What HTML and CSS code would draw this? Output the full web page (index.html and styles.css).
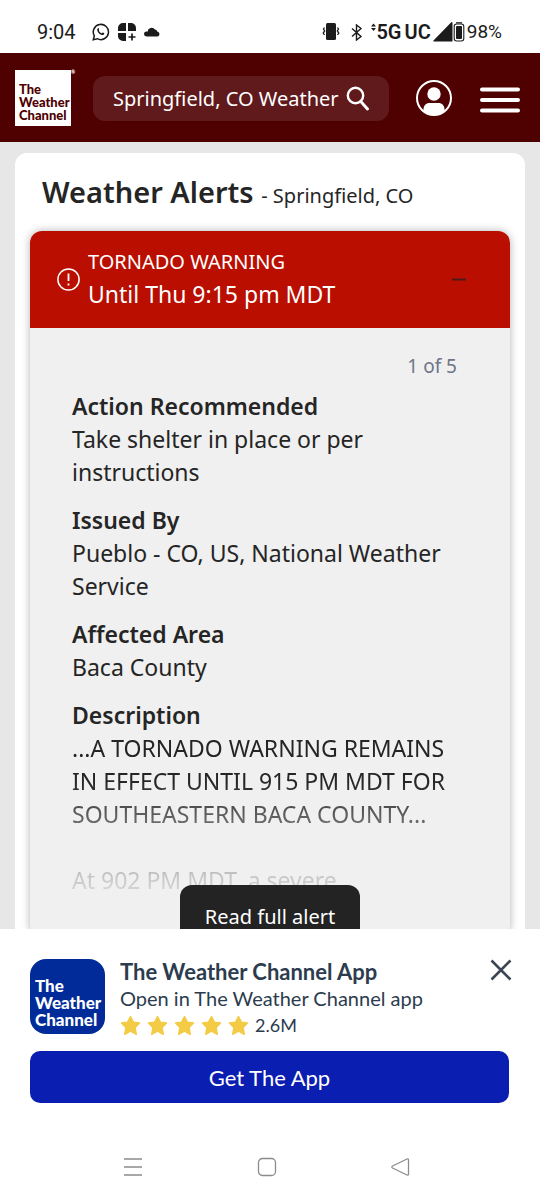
FILE: index.html
```html
<!DOCTYPE html>
<html lang="en">
<head>
<meta charset="utf-8">
<meta name="viewport" content="width=device-width, initial-scale=1">
<title>Weather Alerts - Springfield, CO</title>
<link rel="stylesheet" href="styles.css">
</head>
<body>
<div class="status-bar">
  <span class="clock">9:04</span>
  <div class="status-left">
    <svg width="18" height="18" viewBox="0 0 18 18" fill="none" stroke="#1b1b1b" stroke-width="1.5"><path d="M1.3 16.7l1-3.9a7.6 7.6 0 1 1 3 2.9z"/><path d="M6 5.2c.8-.7 1.300 1.300 1 1.900-.5.8.9 2.600 2.300 3.100.8.3 1-.9 1.700-.7l1.300.8c-.2 2-2 2-3.300 1.500C7.200 11 5.700 9.300 5.300 7.600c-.2-1 0-1.800.7-2.400z" fill="#1b1b1b" stroke="none"/></svg>
    <svg class="apps" width="18" height="18" viewBox="0 0 18 18" fill="#1b1b1b"><path d="M8 0v8H0V5a5 5 0 0 1 5-5zM10 0h3a5 5 0 0 1 5 5v3h-8zM0 10h8v8H5a5 5 0 0 1-5-5z"/><path d="M14 10.500v7M10.500 14h7" stroke="#1b1b1b" stroke-width="1.700"/></svg>
    <svg width="16" height="10" viewBox="0 0 16 10" fill="#1b1b1b"><path d="M2.500 9.500a2.500 2.500 0 0 1 0-5c.5 0 .7 0 1 .2A4.200 4.200 0 0 1 11 2.500c1.300 0 2 1 2.200 2a2.600 2.600 0 0 1 .6 5z"/></svg>
  </div>
  <div class="status-right">
    <svg width="18" height="18" viewBox="0 0 18 18"><rect x="4" y="0" width="10" height="17" rx="1.500" fill="#1b1b1b"/><path d="M2.500 4.500l-1 1.500 1.200 2-1.500 2 1.300 2M15.500 4.500l1 1.500-1.200 2 1.500 2-1.300 2" fill="none" stroke="#1b1b1b" stroke-width="1.300"/></svg>
    <svg class="bluetooth" width="12" height="17" viewBox="0 0 12 17" fill="none" stroke="#1b1b1b" stroke-width="1.400"><path d="M1 4.500l9 8-4.500 3.500V1L10 4.500l-9 8"/></svg>
    <svg class="updown" width="5" height="18" viewBox="0 0 5 18" fill="#1b1b1b"><path d="M0 3.500L2.500.5 5 3.500zM0 5h5L2.500 8z"/></svg>
    <span class="network">5G</span><span class="network network-type">UC</span>
    <svg class="signal" width="20" height="20" viewBox="0 0 20 20" fill="#1b1b1b"><path d="M18.500 0a1 1 0 0 1 1 1v18.500H1a.6.6 0 0 1-.5-1z"/></svg>
    <svg width="12" height="20" viewBox="0 0 12 20"><path d="M3 .8h6" stroke="#1b1b1b" stroke-width="1.200"/><rect x="1.200" y="2" width="9.600" height="17" rx="2.500" fill="none" stroke="#1b1b1b" stroke-width="1.100"/><rect x="3" y="4" width="6" height="13" rx="1" fill="#1b1b1b"/></svg>
    <span class="percent">98%</span>
  </div>
</div>

<header class="site-header">
  <a class="logo" href="#" aria-label="The Weather Channel home"><span>The</span><span>Weather</span><span>Channel</span><span class="reg">®</span></a>
  <button class="search" type="button"><span>Springfield, CO Weather</span>
    <svg width="24" height="25" viewBox="0 0 24 25" fill="none" stroke="#fff" stroke-width="2.400"><circle cx="9.500" cy="9.500" r="7.700"/><path d="M14.800 15.500l6.700 7.500" stroke-width="2.900" stroke-linecap="round"/></svg>
  </button>
  <button class="icon-button account" type="button" aria-label="Account">
    <svg width="36" height="36" viewBox="0 0 36 36"><circle cx="18" cy="18" r="17" fill="none" stroke="#fff" stroke-width="2"/><circle cx="18" cy="14" r="6.700" fill="#fff"/><path d="M7.500 31v-1.500c0-4 2.500-6.500 6-6.500h9c3.500 0 6 2.500 6 6.500V31A17 17 0 0 1 7.500 31z" fill="#fff"/></svg>
  </button>
  <button class="icon-button menu" type="button" aria-label="Menu">
    <svg width="40" height="26" viewBox="0 0 40 26" stroke="#fff" stroke-width="4" stroke-linecap="round"><path d="M2 2.500h36M2 13h36M2 23.500h36"/></svg>
  </button>
</header>

<main class="content">
  <section class="card">
    <h1 class="title">Weather Alerts <span class="place">- Springfield, CO</span></h1>
    <article class="alert">
      <button class="alert-head" type="button" aria-expanded="true">
        <svg width="23" height="23" viewBox="0 0 23 23" fill="none" stroke="#fff"><circle cx="11.500" cy="11.500" r="10.600" stroke-width="1.500"/><path d="M11.500 5.500v7.500M11.500 15.500v2" stroke-width="1.800"/></svg>
        <span class="alert-text"><span class="alert-name">TORNADO WARNING</span><span class="alert-until">Until Thu 9:15 pm MDT</span></span>
        <svg width="14" height="3" viewBox="0 0 14 3"><path d="M0 1.500h14" stroke="#4b1a18" stroke-width="2"/></svg>
      </button>
      <div class="alert-body">
        <p class="count">1 of 5</p>
        <dl class="details">
          <div><dt>Action Recommended</dt><dd>Take shelter in place or per<br>instructions</dd></div>
          <div><dt>Issued By</dt><dd>Pueblo - CO, US, National Weather<br>Service</dd></div>
          <div><dt>Affected Area</dt><dd>Baca County</dd></div>
          <div><dt>Description</dt><dd class="faded">...A TORNADO WARNING REMAINS<br>IN EFFECT UNTIL 915 PM MDT FOR<br>SOUTHEASTERN BACA COUNTY...<br><br>At 902 PM MDT, a severe</dd></div>
        </dl>
        <button class="read-more" type="button">Read full alert</button>
      </div>
    </article>
  </section>
</main>

<aside class="app-banner">
  <div class="app-row">
    <div class="app-icon"><span>The</span><span>Weather</span><span>Channel</span></div>
    <div class="app-info">
      <h2 class="app-name">The Weather Channel App</h2>
      <p class="app-sub">Open in The Weather Channel app</p>
      <div class="rating">
        <svg width="129" height="21" viewBox="0 0 129 21" fill="#f4cb45" stroke="#f4cb45" stroke-width="1.500" stroke-linejoin="round" role="img" aria-label="5 stars"><defs><path id="star" d="M10.500 1.500l2.900 5.700 6.100.9-4.400 4.500 1.200 6.700-5.800-3.100-5.800 3.100 1.200-6.700L1.500 8.100l6.100-.9z"/></defs><use href="#star"/><use href="#star" x="27"/><use href="#star" x="54"/><use href="#star" x="81"/><use href="#star" x="108"/></svg>
        <span>2.6M</span>
      </div>
    </div>
    <button class="icon-button close" type="button" aria-label="Close"><svg width="22" height="22" viewBox="0 0 22 22" stroke="#3b4653" stroke-width="2.600"><path d="M1.500 1.500l19 19M20.500 1.500l-19 19"/></svg></button>
  </div>
  <button class="get-app" type="button">Get The App</button>
</aside>

<nav class="system-nav" aria-label="System">
  <button class="icon-button" type="button" aria-label="Recent apps"><svg width="20" height="20" viewBox="0 0 20 20" stroke="#8c8c8c" stroke-width="1.400"><path d="M1 2h18M1 10h18M1 18h18"/></svg></button>
  <button class="icon-button" type="button" aria-label="Home"><svg width="20" height="20" viewBox="0 0 20 20" fill="none" stroke="#8c8c8c" stroke-width="1.300"><rect x="1.500" y="1.500" width="17" height="17" rx="4"/></svg></button>
  <button class="icon-button" type="button" aria-label="Back"><svg width="20" height="20" viewBox="0 0 20 20" fill="none" stroke="#8c8c8c" stroke-width="1.300" stroke-linejoin="round"><path d="M17 2L2.500 9q-1.300 1 0 2L17 18q1.500.5 1.500-1V3q0-1.500-1.500-1z"/></svg></button>
</nav>
</body>
</html>
```
FILE: styles.css
```css
* { box-sizing: border-box; }
body {
  margin: 0;
  height: 100vh;
  display: flex;
  flex-direction: column;
  background: #fff;
  color: #252525;
  font-family: "Noto Sans", sans-serif;
}
h1, h2, p, dl, dd { margin: 0; }
button { border: 0; padding: 0; background: none; color: inherit; font: inherit; cursor: pointer; }
svg { display: block; flex: none; }

.status-bar {
  display: flex;
  align-items: center;
  padding: 20px 38px 9px 37px;
  flex: none;
  font: 20px/24px Roboto, sans-serif;
  color: #1b1b1b;
}
.clock { width: 55px; }
.status-left { display: flex; align-items: center; gap: 8px; }
.status-right { display: flex; align-items: center; margin-left: auto; }
.bluetooth { margin: 0 8px 0 11px; }
.network { font-weight: 600; font-size: 20px; }
.network-type { margin: 0 2px 0 3px; }
.percent { margin-left: 2px; font-size: 19px; }

.site-header {
  display: flex;
  align-items: center;
  flex: none;
  padding: 17px 20px 16px 15px;
  background: #4f0000;
  color: #fff;
}
.logo {
  position: relative;
  display: flex;
  flex-direction: column;
  width: 56px;
  height: 56px;
  padding: 13px 0 0 4px;
  background: #fff;
  color: #4f0000;
  font: 900 13px/13px Lato, sans-serif;
  text-decoration: none;
}
.reg { position: absolute; top: 0; left: 56px; font-size: 5px; line-height: 5px; color: #fff; }
.search {
  display: flex;
  align-items: center;
  justify-content: space-between;
  flex: 1;
  height: 45px;
  margin-left: 22px;
  padding: 0 19px 0 20px;
  border-radius: 12px;
  background: #611a1c;
  font-size: 20px;
  white-space: nowrap;
}
.account { margin: 0 28px 0 27px; }
.menu { margin-top: 3px; }

.content {
  flex: 1;
  min-height: 0;
  padding: 11px 15px 0;
  overflow: hidden;
  background: #e7e7e7;
}
.card { padding: 19px 15px 40px; border-radius: 12px; background: #fff; }
.title { padding: 0 12px; font-size: 29px; line-height: 40px; font-weight: 600; white-space: nowrap; }
.place { font-size: 20px; font-weight: 400; }
.alert { margin-top: 19px; border-radius: 12px; background: #f0f0f0; box-shadow: 0 0 8px rgba(0, 0, 0, .3); }
.alert-head {
  display: flex;
  align-items: center;
  gap: 8px;
  width: 100%;
  padding: 16px 44px 16px 27px;
  border-radius: 12px 12px 0 0;
  background: #b90e00;
  color: #fff;
  text-align: left;
}
.alert { margin-top: 15px; }
.alert-text { flex: 1; }
.alert-name, .alert-until { display: block; }
.alert-name { font-size: 20px; line-height: 30px; }
.alert-until { font-size: 23px; line-height: 35px; }
.alert-body { position: relative; padding: 22px 42px 40px; font-size: 23px; line-height: 33px; }
.count { padding-right: 11px; font-size: 19px; color: #6f7585; text-align: right; }
.details { display: grid; gap: 15px; padding-top: 7px; white-space: nowrap; }
dt { font-weight: 600; }
.faded {
  -webkit-mask-image: linear-gradient(#000 50px, rgba(0, 0, 0, .2) 145px, rgba(0, 0, 0, .1));
  mask-image: linear-gradient(#000 50px, rgba(0, 0, 0, .2) 145px, rgba(0, 0, 0, .1));
}
.read-more {
  position: absolute;
  left: 50%;
  bottom: -10px;
  width: 180px;
  height: 62px;
  transform: translateX(-50%);
  border-radius: 12px;
  background: #232323;
  color: #fff;
  font-size: 20px;
}

.app-banner {
  flex: none;
  padding: 30px 31px 0 30px;
  background: #fff;
  color: #2c3c4e;
  font-family: Lato, sans-serif;
}
.app-row { display: flex; align-items: flex-start; }
.app-icon {
  display: flex;
  flex-direction: column;
  width: 75px;
  height: 75px;
  padding: 18px 0 0 5px;
  border-radius: 16px;
  background: #022b9a;
  color: #fff;
  font: 900 17px/17px Lato, sans-serif;
}
.app-info { flex: 1; margin-left: 15px; white-space: nowrap; }
.app-name { font-size: 22px; line-height: 26px; font-weight: 700; }
.app-sub { font-size: 20px; line-height: 26px; }
.rating { display: flex; align-items: center; gap: 6px; font-size: 18px; line-height: 28px; }
.close { margin-right: -3px; }
.get-app {
  display: block;
  width: 100%;
  height: 52px;
  margin-top: 12px;
  border-radius: 10px;
  background: #0a1eb1;
  color: #fff;
  font-size: 22px;
}

.system-nav {
  display: flex;
  justify-content: space-between;
  flex: none;
  padding: 54px 130px 23px 123px;
  background: #fff;
}
```
